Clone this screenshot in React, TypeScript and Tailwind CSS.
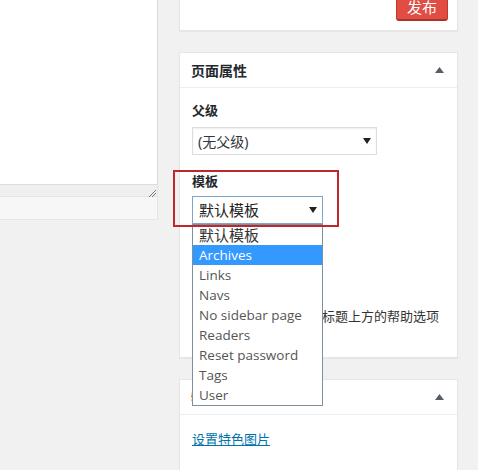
import React from "react";

const cjk = { fontFamily: '"Noto Sans", "Noto Sans CJK SC", sans-serif' };

const templates = [
  "默认模板",
  "Archives",
  "Links",
  "Navs",
  "No sidebar page",
  "Readers",
  "Reset password",
  "Tags",
  "User",
];

const ArrowDown = () => (
  <svg width="8" height="6" viewBox="0 0 8 6">
    <path d="M0 0 H8 L4 6 Z" fill="#222" />
  </svg>
);

const ArrowUp = () => (
  <svg width="9" height="6" viewBox="0 0 9 6">
    <path d="M0 6 H9 L4.5 0 Z" fill="#555d66" />
  </svg>
);

const Box = ({ title, children, className }: { title: string; children: React.ReactNode; className?: string }) => (
  <div className={`shrink-0 border border-[#e5e5e5] bg-white shadow-[0_1px_1px_rgba(0,0,0,0.04)] ${className ?? ""}`}>
    <div className="flex h-[35px] items-center justify-between border-b border-[#eee] pl-[11px] pr-[13px]">
      <span className="text-[14px] font-bold text-[#23282d]">{title}</span>
      <ArrowUp />
    </div>
    {children}
  </div>
);

export default function App() {
  return (
    <div className="relative flex h-[470px] w-[478px] overflow-hidden bg-[#f1f1f1]" style={cjk}>
      {/* editor */}
      <div className="flex w-[158px] shrink-0 flex-col">
        <div className="h-[185px] shrink-0 border-b border-r border-[#dcdcdc] bg-white" />
        <div className="relative h-[35px] shrink-0 border-b border-r border-[#e5e5e5] bg-[#f7f7f7]">
          <div className="h-[12px] border-b border-[#e5e5e5] bg-[#efefef]" />
          <svg className="absolute right-[1px] top-[4px]" width="8" height="8" viewBox="0 0 8 8">
            <path d="M1 8 L8 1 M4 8 L8 4" stroke="#777" strokeWidth="1" />
          </svg>
        </div>
      </div>

      {/* sidebar */}
      <div className="ml-[21px] flex w-[279px] shrink-0 flex-col">
        <div className="flex h-[31px] shrink-0 items-end justify-end overflow-hidden border border-t-0 border-[#e5e5e5] bg-white pb-[9px] pr-[9px] shadow-[0_1px_1px_rgba(0,0,0,0.04)]">
          <button className="flex h-[28px] w-[52px] shrink-0 items-center justify-center rounded-[3px] border border-b-2 border-[#c0392b] border-b-[#a8332a] bg-[#e14d43] pt-[2px] text-[15px] leading-none text-white">
            发布
          </button>
        </div>

        <Box title="页面属性" className="mt-[21px] h-[306px]">
          <div className="px-[12px] pt-[13px] text-[13px] text-[#444]">
            <div className="h-[18px] font-bold leading-[18px] text-[#23282d]">父级</div>
            <div className="mt-[8px] flex h-[28px] w-[185px] items-center justify-between border border-[#ddd] pl-[5px] pr-[5px] text-[14px] text-[#32373c] shadow-[inset_0_1px_2px_rgba(0,0,0,0.07)]">
              <span>(无父级)</span>
              <ArrowDown />
            </div>
            <div className="mt-[17px] h-[18px] font-bold leading-[18px] text-[#23282d]">模板</div>
            <div className="mt-[6px] flex h-[28px] w-[131px] items-center justify-between border border-[#7fa5c9] pl-[6px] pr-[5px] text-[15px] text-[#222]">
              <span>默认模板</span>
              <ArrowDown />
            </div>
            <div className="mt-[14px] h-[18px] font-bold leading-[18px] text-[#23282d]">排序</div>
            <div className="mt-[6px] h-[28px] w-[60px] border border-[#ddd] pl-[6px] leading-[26px]">0</div>
            <p className="mt-[17px] text-[13px] leading-[19px] text-[#333]">需要帮助？请使用屏幕标题上方的帮助选项卡。</p>
          </div>
        </Box>

        <Box title="特色图片" className="mt-[21px] h-[120px]">
          <div className="px-[12px] pt-[11px]">
            <a className="text-[13px] leading-[18px] text-[#0073aa] underline">设置特色图片</a>
          </div>
        </Box>
      </div>

      {/* open select list */}
      <ul
        className="absolute left-[192px] top-[224px] w-[131px] border border-[#7e8fa0] bg-white text-[13.5px] text-[#555]"
        style={{ fontFamily: '"Open Sans", "Noto Sans CJK SC", sans-serif' }}
      >
        {templates.map((t, i) => (
          <li
            key={t}
            className={`h-[20px] whitespace-nowrap pl-[6px] leading-[20px] ${
              i === 1 ? "bg-[#3399ff] text-white" : i === 0 ? "text-[15px] text-[#333]" : ""
            }`}
          >
            {t}
          </li>
        ))}
      </ul>

      {/* annotation */}
      <div className="pointer-events-none absolute left-[173px] top-[170px] h-[57px] w-[166px] border-2 border-[#c0272d]" />
    </div>
  );
}
